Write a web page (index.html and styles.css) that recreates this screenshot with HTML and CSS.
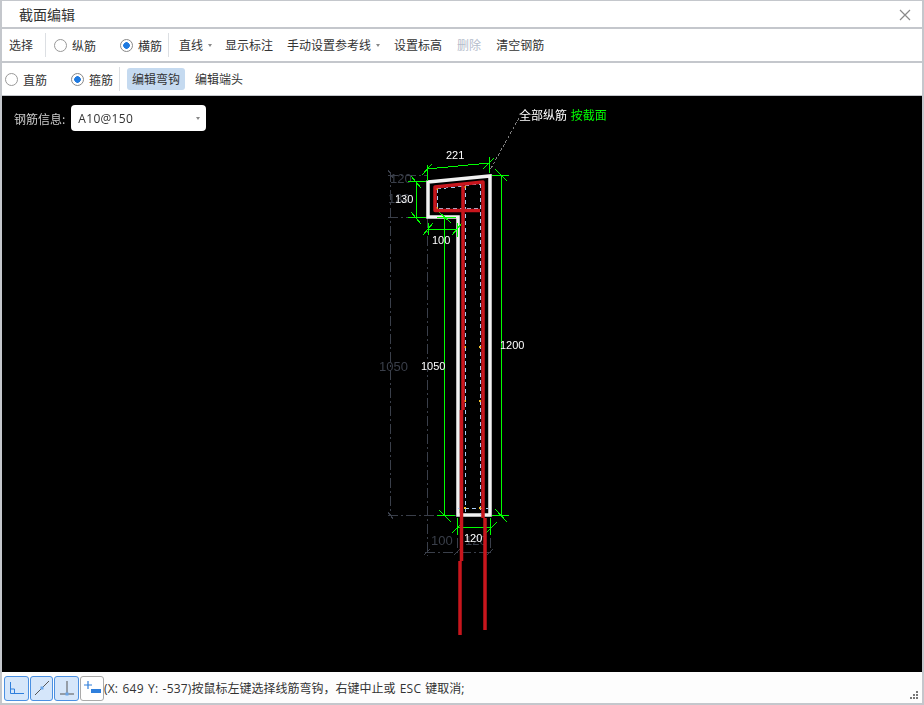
FILE: index.html
```html
<!DOCTYPE html>
<html lang="zh-CN">
  <head>
    <meta charset="UTF-8" />
    <title>截面编辑</title>
    <link rel="stylesheet" href="styles.css">
  </head>
  <body>
    <div class="window">
      <div class="title-bar">
        <span class="title">截面编辑</span>
        <svg class="close" width="12" height="12" viewBox="0 0 12 12">
          <path d="M1 1L11 11M11 1L1 11" stroke="#8a8a8a" stroke-width="1.2" fill="none" />
        </svg>
      </div>

      <div class="toolbar toolbar-one">
        <span class="tool">选择</span>
        <span class="sep sep-a"></span>
        <label class="radio"><i class="dot"></i>纵筋</label>
        <label class="radio radio-next"><i class="dot on"></i>横筋</label>
        <span class="sep sep-b"></span>
        <span class="tool first">直线<i class="caret"></i></span>
        <span class="tool">显示标注</span>
        <span class="tool tight">手动设置参考线<i class="caret"></i></span>
        <span class="tool wide">设置标高</span>
        <span class="tool disabled">删除</span>
        <span class="tool">清空钢筋</span>
      </div>

      <div class="toolbar toolbar-two">
        <label class="radio"><i class="dot"></i>直筋</label>
        <label class="radio radio-next"><i class="dot on"></i>箍筋</label>
        <span class="sep sep-c"></span>
        <span class="tool active">编辑弯钩</span>
        <span class="tool">编辑端头</span>
      </div>

      <div class="canvas">
        <svg class="drawing" width="920" height="576" viewBox="2 96 920 576">
          <!-- 灰色参考标注 -->
          <path class="dim-gray" d="M390 172V516M388 175H428M388 217H428M388 515H456M427 218V556M425 552H491M457 520V556M490 520V556" />
          <path class="gray-tick" d="M388 170L393 178M388 512L393 519M424 555L430 549M454 555L460 549M487 555L493 549" />
          <text class="label-gray" x="390" y="183">120</text>
          <text class="label-gray" x="388" y="203">130</text>
          <text class="label-gray" x="379" y="371">1050</text>
          <text class="label-gray" x="431" y="545">100</text>
          <text class="label-gray" x="465" y="545">120</text>
          <path class="leader" d="M519 118L490 170" />

          <!-- 截面轮廓 -->
          <path class="outline" d="M428 182L490 176V515H458V217H428Z" />

          <!-- 保护层虚线 -->
          <path class="inner" d="M437 189L481 184M437 189V208H481M465 186V515M480 184V515M458 508H488" />
          <path class="marks" d="M436 188h2v2h-2zM436 207h2v2h-2zM464 186h2v2h-2zM464 346h2v2h-2zM479 346h2v2h-2zM464 400h2v2h-2zM479 400h2v2h-2zM464 507h2v2h-2zM479 507h2v2h-2z" />

          <!-- 绿色标注 -->
          <path class="dim-green" d="M427 169L489 163M427 165V181M489 157V173M422 175L432 164M483 169L494 158" />
          <path class="dim-green" d="M416 182V217M408 181H426M408 217H426M411 176L421 188M411 212L421 224" />
          <path class="dim-green" d="M428 229H457M428 223V235M457 223V237M423 235L433 223M452 235L462 223" />
          <path class="dim-green" d="M444 217V515M437 217H456M438 211L451 223M437 515H455M439 510L451 522" />
          <path class="dim-green" d="M501 175V515M492 175H509M495 169L507 181M492 515H509M495 509L507 522" />
          <path class="dim-green" d="M457 527H490M457 518V535M490 518V535M452 533L462 523M486 533L497 522" />
          <text class="label" x="446" y="159">221</text>
          <text class="label" x="395" y="203">130</text>
          <text class="label" x="432" y="244">100</text>
          <text class="label" x="421" y="370">1050</text>
          <text class="label" x="500" y="349">1200</text>
          <text class="label" x="464" y="542">120</text>

          <!-- 钢筋 -->
          <path class="rebar" d="M480 210.500H435V187L483 182V518" />
          <path class="rebar" d="M463 186V410M461.500 410V561M460 561V635M485 518V630" />

          <text class="note" x="519" y="120">全部纵筋 <tspan class="note-green" dx="1">按截面</tspan></text>
        </svg>

        <div class="rebar-info">
          <span class="info-label">钢筋信息:</span>
          <div class="select">A10@150<i class="caret"></i></div>
        </div>
      </div>

      <div class="status-bar">
        <span class="snap on">
          <svg width="18" height="18" viewBox="0 0 18 18">
            <path d="M2.500 3V14.500H16M2.500 10H6.500V14.500" stroke="#2f7fdc" stroke-width="1" fill="none" />
          </svg>
        </span>
        <span class="snap on narrow">
          <svg width="18" height="18" viewBox="0 0 18 18">
            <path d="M2 16L16 2" stroke="#555" stroke-width="1" fill="none" />
            <rect x="7.500" y="7.500" width="3" height="3" fill="#6aa5e8" />
          </svg>
        </span>
        <span class="snap on">
          <svg width="18" height="18" viewBox="0 0 18 18">
            <path d="M9 2V14M2 15H16" stroke="#555" stroke-width="1" fill="none" />
            <rect x="7.500" y="13.500" width="3" height="3" fill="#6aa5e8" />
          </svg>
        </span>
        <span class="snap last">
          <svg width="20" height="18" viewBox="0 0 20 18">
            <path d="M6 2V10M2 6H10" stroke="#2f7fdc" stroke-width="1.200" fill="none" />
            <rect x="9" y="10" width="10" height="4" fill="#2f7fdc" />
          </svg>
        </span>
        <span class="status-text"><span class="latin">(X: 649 Y: -537)</span>按鼠标左键选择线筋弯钩，右键中止或 <span class="latin">ESC</span> 键取消;</span>
        <svg class="grip" width="9" height="9" viewBox="0 0 9 9">
          <path d="M6 0h2v2H6zM3 3h2v2H3zM6 3h2v2H6zM0 6h2v2H0zM3 6h2v2H3zM6 6h2v2H6z" fill="#777" />
        </svg>
      </div>
    </div>
  </body>
</html>
```

FILE: styles.css
```css
* {
  box-sizing: border-box;
}

body {
  margin: 0;
  font-family: "Noto Sans CJK SC", "Liberation Sans", sans-serif;
  font-size: 12px;
  color: #333;
  background-color: #fff;
}

.window {
  width: 924px;
  height: 705px;
  display: flex;
  flex-direction: column;
  border: 2px solid #c4c7cc;
  border-top-width: 1px;
  overflow: hidden;
}

.title-bar {
  height: 26px;
  flex: none;
  display: flex;
  align-items: center;
  justify-content: space-between;
  padding: 0 11px 0 17px;
}

.title {
  font-size: 14px;
}

.close {
  margin-top: 2px;
}

.toolbar {
  height: 34px;
  flex: none;
  display: flex;
  align-items: center;
  border-top: 2px solid #c4c7cc;
  padding-left: 7px;
}

.toolbar-two {
  height: 35px;
  padding-left: 3px;
  border-bottom: 1px solid #c4c7cc;
}

.tool {
  display: flex;
  align-items: center;
  margin-left: 15px;
  line-height: 22px;
}

.tool:first-child,
.tool.first {
  margin-left: 0;
}

.tool.tight {
  margin-left: 14px;
}

.tool.wide {
  margin-left: 16px;
}

.tool.disabled {
  color: #b4bccb;
}

.tool.active {
  margin-left: 0;
  margin-right: -5px;
  padding: 0 5px;
  background-color: #c5daf0;
  border-radius: 3px;
}

.caret {
  width: 0;
  height: 0;
  margin-left: 5px;
  margin-right: -2px;
  border-left: 2.5px solid transparent;
  border-right: 2.5px solid transparent;
  border-top: 3px solid #888;
}

.sep {
  width: 1px;
  height: 24px;
  background-color: #dcdfe3;
}

.sep-a {
  margin: 0 8px 0 12px;
}

.sep-b {
  margin: 0 10px 0 6px;
}

.sep-c {
  margin: 0 7px 0 6px;
}

.radio {
  display: flex;
  align-items: center;
  gap: 5px;
}

.radio-next {
  margin-left: 24px;
}

.dot {
  width: 13px;
  height: 13px;
  border: 1px solid #999;
  border-radius: 50%;
  background-color: #fff;
}

.dot.on {
  border-color: #888;
  background: radial-gradient(circle, #1f7ae0 0, #1f7ae0 3px, #fff 3.6px);
}

.canvas {
  position: relative;
  height: 576px;
  flex: none;
  padding: 9px 12px;
  background-color: #000;
}

.drawing {
  position: absolute;
  top: 0;
  left: 0;
  will-change: opacity;
}

.rebar-info {
  position: relative;
  display: flex;
  align-items: center;
  gap: 6px;
}

.info-label {
  color: #ccc;
}

.select {
  width: 135px;
  height: 26px;
  display: flex;
  align-items: center;
  justify-content: space-between;
  padding: 0 8px 0 7px;
  font-family: "Open Sans", "Noto Sans CJK SC", sans-serif;
  letter-spacing: 0.3px;
  background-color: #fff;
  border-radius: 4px;
}

.dim-gray {
  fill: none;
  stroke: #3a3f4a;
  stroke-width: 1;
  stroke-dasharray: 10 3 2 3;
  shape-rendering: crispEdges;
}

.gray-tick {
  fill: none;
  stroke: #3a3f4a;
  shape-rendering: crispEdges;
}

.label-gray {
  font: 13px "Liberation Sans", sans-serif;
  fill: #3a3f4a;
}

.leader {
  fill: none;
  stroke: #808080;
  stroke-dasharray: 3 2;
  shape-rendering: crispEdges;
}

.outline {
  fill: none;
  stroke: #f2f2f2;
  stroke-width: 3.5;
}

.inner {
  fill: none;
  stroke: #a8cdf5;
  stroke-width: 1;
  stroke-dasharray: 4 3;
  shape-rendering: crispEdges;
}

.marks {
  fill: #f2c230;
}

.dim-green {
  fill: none;
  stroke: #00ff00;
  stroke-width: 1;
  shape-rendering: crispEdges;
}

.rebar {
  fill: none;
  stroke: #c8161d;
  stroke-width: 3.5;
  stroke-linejoin: round;
}

.label {
  font: 11px "Liberation Sans", sans-serif;
  fill: #fff;
}

.note {
  font-size: 12px;
  fill: #fff;
}

.note-green {
  fill: #00ff00;
}

.status-bar {
  position: relative;
  flex: 1;
  display: flex;
  align-items: center;
  padding: 1px 0 0 2px;
  background-color: #fdfdfd;
}

.snap {
  width: 25px;
  height: 25px;
  margin-right: 1px;
  display: flex;
  align-items: center;
  justify-content: center;
  border: 1px solid #aaa;
  border-radius: 3px;
  background-color: #fff;
}

.snap.on {
  border-color: #4a90e2;
  background-color: #d5e6fa;
}

.snap.narrow {
  width: 23px;
}

.snap.last {
  width: 24px;
  margin-right: 0;
}

.status-text {
  font-family: "Open Sans", "Noto Sans CJK SC", sans-serif;
  white-space: nowrap;
  word-spacing: 1px;
}

.latin {
  letter-spacing: 0.2px;
}

.grip {
  position: absolute;
  right: 3px;
  bottom: 3px;
}
```
